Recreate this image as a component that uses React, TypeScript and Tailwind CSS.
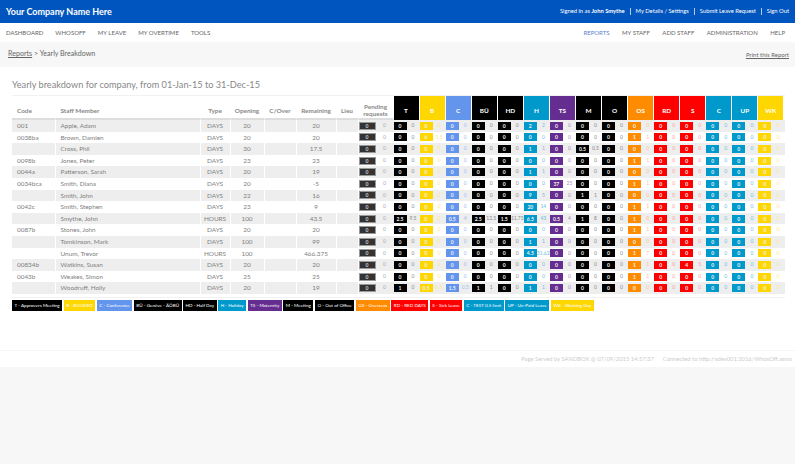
type LeaveType = { key: string; label: string; bg: string; text: string };

const types: LeaveType[] = [
  { key: "T", label: "Approvers Meeting", bg: "bg-black", text: "text-[#8a8a8a]" },
  { key: "B", label: "BOOKED", bg: "bg-[#ffd700]", text: "text-[#ffe98a]" },
  { key: "C", label: "Conference", bg: "bg-[#6495ed]", text: "text-[#9dbcf3]" },
  { key: "BÜ", label: "Genève - ÄÖBÜ", bg: "bg-black", text: "text-[#8a8a8a]" },
  { key: "HD", label: "Half Day", bg: "bg-black", text: "text-[#8a8a8a]" },
  { key: "H", label: "Holiday", bg: "bg-[#0099cc]", text: "text-[#6fc0de]" },
  { key: "TS", label: "Maternity", bg: "bg-[#662d91]", text: "text-[#a98cc2]" },
  { key: "M", label: "Meeting", bg: "bg-black", text: "text-[#8a8a8a]" },
  { key: "O", label: "Out of Office", bg: "bg-black", text: "text-[#8a8a8a]" },
  { key: "OS", label: "Overseas", bg: "bg-[#ff8c00]", text: "text-[#ffc48a]" },
  { key: "RD", label: "RED DAYS", bg: "bg-[#ff0000]", text: "text-[#ff9a9a]" },
  { key: "S", label: "Sick Leave", bg: "bg-[#ff0000]", text: "text-[#ff9a9a]" },
  { key: "C", label: "TEST 0.5 limit", bg: "bg-[#0099cc]", text: "text-[#6fc0de]" },
  { key: "UP", label: "Un-Paid Leave", bg: "bg-[#0099cc]", text: "text-[#6fc0de]" },
  { key: "WK", label: "Working Day", bg: "bg-[#ffd700]", text: "text-[#ffe98a]" },
];

type Row = {
  code: string;
  name: string;
  type: string;
  opening: string;
  remaining: string;
  // index into types -> [badge, number]
  vals: Record<number, [string, string]>;
};

const rows: Row[] = [
  { code: "001", name: "Apple, Adam", type: "DAYS", opening: "20", remaining: "20", vals: { 5: ["2", "2"] } },
  { code: "0038ba", name: "Brown, Damien", type: "DAYS", opening: "20", remaining: "20", vals: { 1: ["6", "5.5"], 9: ["1", "1"] } },
  { code: "", name: "Cross, Phil", type: "DAYS", opening: "30", remaining: "17.5", vals: { 5: ["1", "1"], 7: ["0.5", "0.5"] } },
  { code: "0098b", name: "Jones, Peter", type: "DAYS", opening: "23", remaining: "23", vals: { 9: ["1", "1"] } },
  { code: "0044a", name: "Patterson, Sarah", type: "DAYS", opening: "20", remaining: "19", vals: { 5: ["1", "1"] } },
  { code: "0034bca", name: "Smith, Diana", type: "DAYS", opening: "20", remaining: "-5", vals: { 6: ["37", "25"], 9: ["1", "1"] } },
  { code: "", name: "Smith, John", type: "DAYS", opening: "22", remaining: "16", vals: { 5: ["9", "5"], 7: ["1", "1"] } },
  { code: "0042c", name: "Smith, Stephen", type: "DAYS", opening: "23", remaining: "9", vals: { 5: ["20", "14"], 9: ["1", "1"] } },
  {
    code: "",
    name: "Smythe, John",
    type: "HOURS",
    opening: "100",
    remaining: "43.5",
    vals: {
      0: ["2.5", "9.5"],
      2: ["0.5", "4"],
      3: ["2.5", "12.5"],
      4: ["1.5", "11.75"],
      5: ["6.5", "43"],
      6: ["0.5", "4"],
      7: ["1", "8"],
      9: ["1", "8"],
    },
  },
  { code: "0087b", name: "Stones, John", type: "DAYS", opening: "20", remaining: "20", vals: { 9: ["1", "1"] } },
  { code: "", name: "Tomkinson, Mark", type: "DAYS", opening: "100", remaining: "99", vals: { 5: ["1", "1"] } },
  { code: "", name: "Unum, Trevor", type: "HOURS", opening: "100", remaining: "466.375", vals: { 5: ["4.5", "31.625"], 9: ["1", "7"] } },
  { code: "00834b", name: "Watkins, Susan", type: "DAYS", opening: "20", remaining: "20", vals: { 9: ["1", "1"], 11: ["4", "5"] } },
  { code: "0043b", name: "Weakes, Simon", type: "DAYS", opening: "25", remaining: "25", vals: { 9: ["1", "1"] } },
  {
    code: "",
    name: "Woodruff, Holly",
    type: "DAYS",
    opening: "20",
    remaining: "19",
    vals: { 0: ["1", "0"], 1: ["0.5", "0.5"], 2: ["1.5", "0.5"], 3: ["1", "1"], 5: ["1", "1"] },
  },
];

const gridCols =
  "grid grid-cols-[43.5px_145px_30px_34px_32px_40px_22px_35px_repeat(15,26.07px)]";

function TextCell({ children, left }: { children?: React.ReactNode; left?: boolean }) {
  return (
    <div
      className={
        "border-r border-white whitespace-nowrap leading-[11.6px] " +
        (left ? "pl-[5px] text-left" : "text-center")
      }
    >
      {children}
    </div>
  );
}

function HeadCell({ children, left }: { children: React.ReactNode; left?: boolean }) {
  return (
    <div
      className={
        "flex items-center border-r border-b-2 border-r-white border-b-[#ddd] pt-[6px] text-[6.4px] font-bold text-[#888] leading-[7px] " +
        (left ? "pl-[5px] justify-start" : "justify-center text-center")
      }
    >
      <span>{children}</span>
    </div>
  );
}

function TypeCell({ t, val }: { t: LeaveType; val: [string, string] }) {
  return (
    <div className="flex h-full items-center">
      <div className={"h-[8px] w-[13px] shrink-0 text-center text-[5px] font-bold leading-[8px] text-[#eee] " + t.bg}>
        {val[0]}
      </div>
      <div className={"flex-1 text-center text-[5px] whitespace-nowrap " + t.text}>{val[1]}</div>
    </div>
  );
}

export default function App() {
  return (
    <div className="flex h-screen flex-col overflow-hidden bg-[#f7f7f7] font-['Lato',sans-serif] text-[6.4px] text-[#808080]">
      <header className="flex h-[23px] shrink-0 items-center justify-between bg-[#0055be] pl-[6px] pr-[6px] text-white">
        <span className="text-[9px] font-bold">Your Company Name Here</span>
        <div className="flex items-center text-[5.8px]">
          <span>
            Signed in as <b>John Smythe</b>
          </span>
          <span className="mx-[5px] h-[7px] border-l border-white/70" />
          <span>My Details / Settings</span>
          <span className="mx-[5px] h-[7px] border-l border-white/70" />
          <span>Submit Leave Request</span>
          <span className="mx-[5px] h-[7px] border-l border-white/70" />
          <span>Sign Out</span>
        </div>
      </header>

      <nav className="flex h-[19px] shrink-0 items-center justify-between bg-white pl-[6px] pr-[10px] text-[6px] text-[#666]">
        <div className="flex gap-[12px]">
          <span>DASHBOARD</span>
          <span>WHOSOFF</span>
          <span>MY LEAVE</span>
          <span>MY OVERTIME</span>
          <span>TOOLS</span>
        </div>
        <div className="flex items-center gap-[12.5px]">
          <span className="text-[#5b7fd1]">REPORTS</span>
          <span>MY STAFF</span>
          <span>ADD STAFF</span>
          <span>ADMINISTRATION</span>
          <span>HELP</span>
        </div>
      </nav>

      <div className="flex h-[25px] shrink-0 items-center justify-between bg-[#f7f7f7] pl-[8px] pr-[6px] text-[7.1px] text-[#666]">
        <span>
          <span className="underline">Reports</span> &gt; Yearly Breakdown
        </span>
        <span className="text-[6px] underline">Print this Report</span>
      </div>

      <main className="h-[283px] shrink-0 bg-white pl-[12px]">
        <h1 className="pt-[10px] text-[9.2px] leading-[16px] font-normal text-[#888]">
          Yearly breakdown for company, from 01-Jan-15 to 31-Dec-15
        </h1>
        <div className="mt-[2px] h-[1px] w-[773px] bg-[#f2f2f2]" />

        <div className={gridCols + " h-[24px] w-[773px]"}>
          <HeadCell left>Code</HeadCell>
          <HeadCell left>Staff Member</HeadCell>
          <HeadCell>Type</HeadCell>
          <HeadCell>Opening</HeadCell>
          <HeadCell>C/Over</HeadCell>
          <HeadCell>Remaining</HeadCell>
          <HeadCell>Lieu</HeadCell>
          <HeadCell>
            Pending
            <br />
            requests
          </HeadCell>
          {types.map((t, i) => (
            <div
              key={i}
              className={"flex items-center justify-center border-r border-white pt-[5px] text-[6.4px] font-bold text-white " + t.bg}
            >
              {t.key}
            </div>
          ))}
        </div>

        <div className="w-[773px]">
          {rows.map((r, i) => (
            <div
              key={r.name}
              className={gridCols + " h-[11.6px] " + (i % 2 === 0 ? "bg-[#eeeeee]" : "bg-white")}
            >
              <TextCell left>{r.code}</TextCell>
              <TextCell left>{r.name}</TextCell>
              <TextCell>{r.type}</TextCell>
              <TextCell>{r.opening}</TextCell>
              <TextCell />
              <TextCell>{r.remaining}</TextCell>
              <TextCell />
              <div className="flex h-full items-center">
                <div className="h-[8px] w-[17px] shrink-0 border border-[#999] bg-[#333] text-center text-[5px] font-bold leading-[6px] text-[#ccc]">
                  0
                </div>
                <div className="flex-1 text-center text-[5px] text-[#aaa]">0</div>
              </div>
              {types.map((t, j) => (
                <TypeCell key={j} t={t} val={r.vals[j] ?? ["0", "0"]} />
              ))}
            </div>
          ))}
        </div>
        <div className="mt-[3px] h-[1px] w-[773px] bg-[#f2f2f2]" />

        <div className="mt-[2px] flex gap-[1.5px] text-[4.6px] leading-[11px] text-white">
          {types.map((t, i) => (
            <span key={i} className={"whitespace-nowrap px-[2.5px] " + t.bg}>
              {t.key} - {t.label}
            </span>
          ))}
        </div>
      </main>

      <footer className="flex h-[17px] shrink-0 items-center justify-end gap-[9px] border-t border-[#f5f5f5] bg-white pr-[3px] text-[5.8px] text-[#ccc]">
        <span>Page Served by SANDBOX @ 07/09/2015 14:57:37</span>
        <span>Connected to http://xdev001:2016/WhosOff.asmx</span>
      </footer>
    </div>
  );
}
